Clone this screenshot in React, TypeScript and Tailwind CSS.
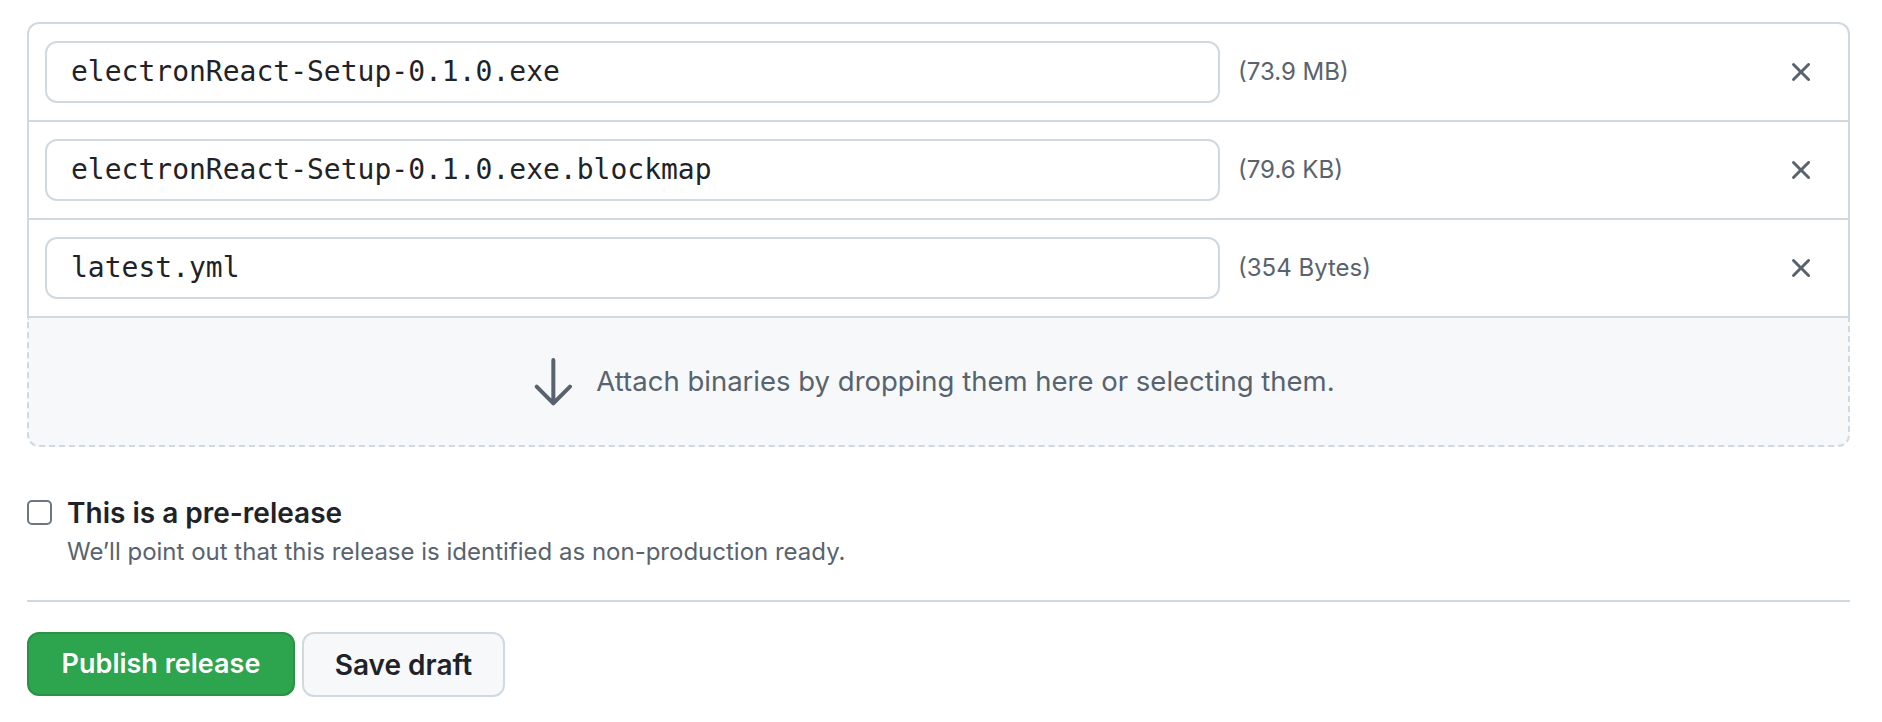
import React from "react";

const files = [
  { name: "electronReact-Setup-0.1.0.exe", size: "(73.9 MB)" },
  { name: "electronReact-Setup-0.1.0.exe.blockmap", size: "(79.6 KB)" },
  { name: "latest.yml", size: "(354 Bytes)" },
];

const XIcon = () => (
  <svg width="32" height="32" viewBox="0 0 16 16" fill="#59636e">
    <path d="M3.72 3.72a.75.75 0 0 1 1.06 0L8 6.94l3.22-3.22a.749.749 0 0 1 1.275.326.749.749 0 0 1-.215.734L9.06 8l3.22 3.22a.749.749 0 0 1-.326 1.275.749.749 0 0 1-.734-.215L8 9.06l-3.22 3.22a.751.751 0 0 1-1.042-.018.751.751 0 0 1-.018-1.042L6.94 8 3.72 4.78a.75.75 0 0 1 0-1.06Z" />
  </svg>
);

const ArrowDown = () => (
  <svg width="64" height="64" viewBox="0 0 24 24" fill="#59636e">
    <path d="M4.97 13.22a.75.75 0 0 1 1.06 0L11 18.19V3.75a.75.75 0 0 1 1.5 0v14.44l4.97-4.97a.749.749 0 0 1 1.275.326.749.749 0 0 1-.215.734l-6.25 6.25a.75.75 0 0 1-1.06 0l-6.25-6.25a.75.75 0 0 1 0-1.06Z" />
  </svg>
);

export default function App() {
  return (
    <div
      className="min-h-screen bg-white pt-[22px] pl-[27px] pr-[32px]"
      style={{ fontFamily: 'Inter, "Liberation Sans", Arial, sans-serif' }}
    >
      {/* file list */}
      <div className="rounded-t-[12px] border-2 border-b-0 border-[#d1d9e0]">
        {files.map((f) => (
          <div
            key={f.name}
            className="flex h-[98px] items-center border-b-2 border-[#d1d9e0] pl-[16px]"
          >
            <div
              className="flex h-[62px] w-[1175px] items-center rounded-[12px] border-2 border-[#d1d9e0] bg-white px-[24px] text-[28px] text-[#1f2328]"
              style={{ fontFamily: '"DejaVu Sans Mono", "Liberation Mono", monospace' }}
            >
              {f.name}
            </div>
            <span className="ml-[18px] text-[24px] text-[#59636e]">{f.size}</span>
            <button className="ml-auto mr-[31px] flex items-center">
              <XIcon />
            </button>
          </div>
        ))}
      </div>

      {/* drop zone */}
      <div className="flex h-[129px] items-center justify-center rounded-b-[12px] border-2 border-t-0 border-dashed border-[#d1d9e0] bg-[#f6f8fa] pr-[20px]">
        <ArrowDown />
        <span className="ml-[10px] text-[27.5px] text-[#59636e]">
          Attach binaries by dropping them here or selecting them.
        </span>
      </div>

      {/* pre-release */}
      <div className="mt-[45px] flex items-start">
        <div className="mt-[8px] h-[25px] w-[25px] shrink-0 rounded-[5px] border-2 border-[#6e7781] bg-white" />
        <div className="ml-[15px]">
          <div className="text-[28px] font-semibold leading-[42px] text-[#1f2328]">
            This is a pre-release
          </div>
          <div className="text-[24px] leading-[36px] text-[#59636e]">
            We’ll point out that this release is identified as non-production ready.
          </div>
        </div>
      </div>

      <div className="mt-[30px] h-[2px] bg-[#d1d9e0]" />

      {/* actions */}
      <div className="mt-[30px] flex gap-[7px]">
        <button className="h-[64px] w-[268px] rounded-[12px] border-2 border-[#2a9147] bg-[#2da44e] text-[27px] font-semibold text-white">
          Publish release
        </button>
        <button className="h-[65px] w-[203px] rounded-[12px] border-2 border-[#d1d9e0] bg-[#f6f8fa] text-[28px] font-semibold text-[#1f2328]">
          Save draft
        </button>
      </div>
    </div>
  );
}
